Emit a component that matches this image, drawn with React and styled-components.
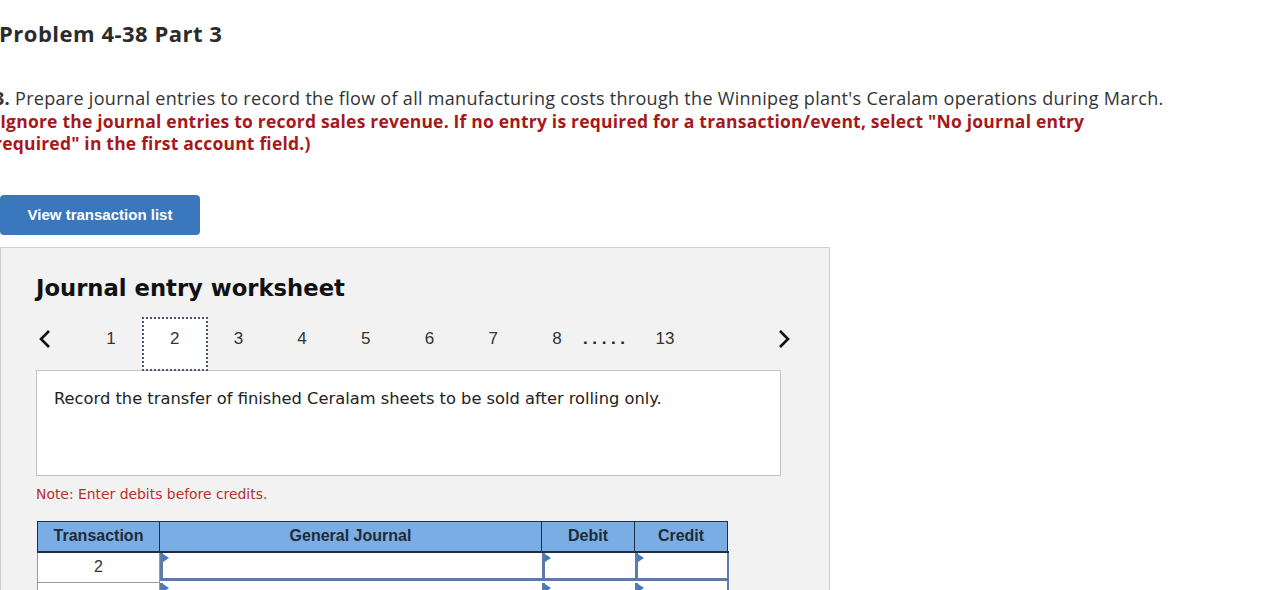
import styled, { createGlobalStyle } from "styled-components";

const GlobalStyle = createGlobalStyle`
  body {
    margin: 0;
    background: #fff;
    font-family: "Liberation Sans", Arial, sans-serif;
    overflow: hidden;
  }
`;

const pages = ["1", "2", "3", "4", "5", "6", "7"];

function Chevron({ dir }) {
  return (
    <svg width="14" height="20" viewBox="0 0 14 20">
      <polyline
        points={dir === "left" ? "11,2 3,10 11,18" : "3,2 11,10 3,18"}
        fill="none"
        stroke="#111"
        strokeWidth="2.6"
      />
    </svg>
  );
}

function App() {
  return (
    <Page>
      <GlobalStyle />
      <Title>Problem 4-38 Part 3</Title>
      <Question>
        <b>3.</b> Prepare journal entries to record the flow of all manufacturing costs through the Winnipeg plant's Ceralam operations during March.
        <Warn>
          (Ignore the journal entries to record sales revenue. If no entry is required for a transaction/event, select "No journal entry required" in the first account field.)
        </Warn>
      </Question>
      <BlueButton>View transaction list</BlueButton>
      <Worksheet>
        <SheetTitle>Journal entry worksheet</SheetTitle>
        <Pager>
          <Arrow><Chevron dir="left" /></Arrow>
          {pages.map((p) => (
            <PageNum key={p} $active={p === "2"}>{p}</PageNum>
          ))}
          <PageNum $w={58} $shift>8</PageNum>
          <Dots>.....</Dots>
          <PageNum $w={48}>13</PageNum>
          <Arrow $right><Chevron dir="right" /></Arrow>
        </Pager>
        <Description>
          Record the transfer of finished Ceralam sheets to be sold after rolling only.
        </Description>
        <Note>Note: Enter debits before credits.</Note>
        <Journal>
          <thead>
            <tr>
              <Th $w={121}>Transaction</Th>
              <Th $w={381}>General Journal</Th>
              <Th $w={92}>Debit</Th>
              <Th $w={92}>Credit</Th>
            </tr>
          </thead>
          <tbody>
            {["2", ""].map((t, i) => (
              <tr key={i}>
                <TxCell>{t}</TxCell>
                <InputCell><Field /></InputCell>
                <InputCell><Field /></InputCell>
                <InputCell $last><Field /></InputCell>
              </tr>
            ))}
          </tbody>
        </Journal>
      </Worksheet>
    </Page>
  );
}

const Page = styled.div`
  padding-top: 19px;
`;

const Title = styled.h1`
  margin: 0 0 0 -1px;
  font-family: "Open Sans", Lato, sans-serif;
  font-weight: 700;
  font-size: 22px;
  line-height: 28px;
  letter-spacing: 0.5px;
  color: #2b2b2b;
`;

const Question = styled.div`
  margin: 40px 0 0 -6px;
  font-family: "Open Sans", Lato, sans-serif;
  font-size: 18px;
  line-height: 22.5px;
  letter-spacing: 0.3px;
  color: #333;
  b {
    font-weight: 700;
  }
`;

const Warn = styled.div`
  width: 1100px;
  color: #a8171a;
  font-weight: 700;
  font-size: 17.5px;
  letter-spacing: 0.2px;
`;

const BlueButton = styled.button`
  display: block;
  margin-top: 40px;
  width: 200px;
  height: 40px;
  border: none;
  border-radius: 4px;
  background: #3a77bc;
  color: #fff;
  font-family: "Liberation Sans", Arial, sans-serif;
  font-weight: 700;
  font-size: 15px;
`;

const Worksheet = styled.section`
  margin-top: 12px;
  width: 830px;
  height: 400px;
  box-sizing: border-box;
  background: #f2f2f2;
  border: 1px solid #cfcfcf;
  padding: 25px 0 0 35px;
`;

const SheetTitle = styled.h2`
  margin: 0;
  font-family: "DejaVu Sans", Verdana, sans-serif;
  font-weight: 700;
  font-size: 22.7px;
  line-height: 30px;
  color: #111;
`;

const Pager = styled.div`
  margin-top: 15px;
  width: 755px;
  height: 52px;
  display: flex;
  align-items: flex-start;
  font-family: "Liberation Sans", Arial, sans-serif;
  font-size: 17px;
  line-height: 20px;
  color: #333;
`;

const Arrow = styled.span`
  display: flex;
  align-items: center;
  height: 20px;
  margin-top: 11px;
  width: ${(p) => (p.$right ? "auto" : "43.2px")};
  margin-left: ${(p) => (p.$right ? "auto" : "0")};
  padding-left: ${(p) => (p.$right ? "0" : "2px")};
  box-sizing: border-box;
`;

const PageNum = styled.span`
  box-sizing: border-box;
  width: ${(p) => (p.$w ? p.$w + "px" : "63.7px")};
  height: 52px;
  padding-top: 11px;
  text-align: center;
  padding-left: ${(p) => (p.$shift ? "6px" : "0")};
  background: ${(p) => (p.$active ? "#fff" : "transparent")};
  outline: ${(p) => (p.$active ? "2px dotted #4a5a70" : "none")};
  outline-offset: -1px;
`;

const Dots = styled.span`
  width: 58px;
  padding-top: 11px;
  font-weight: 700;
  letter-spacing: 4.6px;
  color: #222;
`;

const Description = styled.div`
  width: 745px;
  height: 106px;
  box-sizing: border-box;
  background: #fff;
  border: 1px solid #c4c4c4;
  padding: 18px 17px;
  font-family: "DejaVu Sans", Verdana, sans-serif;
  font-size: 16.3px;
  line-height: 20px;
  color: #222;
`;

const Note = styled.p`
  margin: 9px 0 0;
  font-family: "DejaVu Sans", Verdana, sans-serif;
  font-size: 13.9px;
  line-height: 18px;
  color: #b7302b;
`;

const Journal = styled.table`
  margin: 18px 0 0 1px;
  border-collapse: collapse;
  table-layout: fixed;
  font-family: "Liberation Sans", Arial, sans-serif;
`;

const Th = styled.th`
  width: ${(p) => p.$w}px;
  height: 29px;
  padding: 0;
  background: #7aade4;
  border: 1px solid #1d2f46;
  border-bottom-width: 2px;
  font-size: 16px;
  font-weight: 700;
  color: #1f2a38;
  text-align: center;
`;

const TxCell = styled.td`
  height: 29px;
  padding: 0;
  background: #fff;
  border: 1px solid #9a9a9a;
  border-top: none;
  text-align: center;
  font-size: 16px;
  color: #333;
`;

const InputCell = styled.td`
  padding: 0;
  height: 29px;
  background: #fff;
  border-right: ${(p) => (p.$last ? "2px solid #5d7ca3" : "none")};
`;

const Field = styled.div`
  position: relative;
  height: 28px;
  box-sizing: border-box;
  border-left: 3px solid #5d7ca3;
  border-bottom: 3px solid #5d7ca3;
  &::before {
    content: "";
    position: absolute;
    left: 0;
    top: 1px;
    border-top: 4px solid transparent;
    border-bottom: 4px solid transparent;
    border-left: 6px solid #3c7bc6;
  }
`;

export default App;
